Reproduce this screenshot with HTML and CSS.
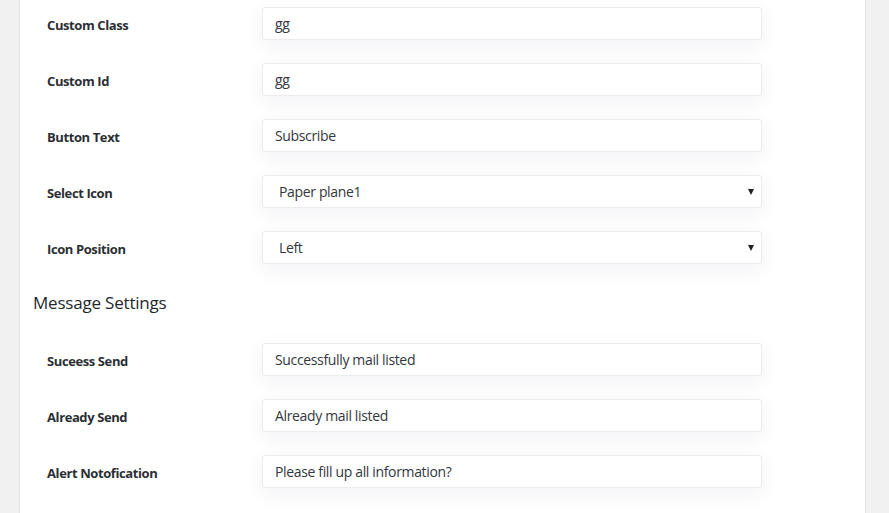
FILE: index.html
```html
<!DOCTYPE html>
<html>
<head>
<meta charset="utf-8">
<link rel="stylesheet" href="styles.css">
</head>
<body>
<div class="panel">
  <div class="row"><label class="lbl">Custom Class</label><input class="field" type="text" value="gg"></div>
  <div class="row"><label class="lbl">Custom Id</label><input class="field" type="text" value="gg"></div>
  <div class="row"><label class="lbl">Button Text</label><input class="field" type="text" value="Subscribe"></div>
  <div class="row"><label class="lbl">Select Icon</label><span class="sel-wrap"><select class="field sel"><option>Paper plane1</option></select></span></div>
  <div class="row"><label class="lbl">Icon Position</label><span class="sel-wrap"><select class="field sel"><option>Left</option></select></span></div>
  <h3 class="heading">Message Settings</h3>
  <div class="row"><label class="lbl">Suceess Send</label><input class="field" type="text" value="Successfully mail listed"></div>
  <div class="row"><label class="lbl">Already Send</label><input class="field" type="text" value="Already mail listed"></div>
  <div class="row"><label class="lbl">Alert Notofication</label><input class="field" type="text" value="Please fill up all information?"></div>
</div>
</body>
</html>
```
FILE: styles.css
```css
html, body {
  margin: 0;
  padding: 0;
  background: #f1f1f1;
  height: 513px;
  overflow: hidden;
}
body {
  font-family: "Open Sans", "Noto Sans", sans-serif;
  color: #23282d;
}
.panel {
  margin-left: 19px;
  width: 847px;
  min-height: 513px;
  background: #fff;
  border-left: 1px solid #e2e2e2;
  border-right: 1px solid #e2e2e2;
  padding-left: 13px;
  box-sizing: border-box;
}
.row {
  display: grid;
  grid-template-columns: 215px 500px;
  align-items: center;
  padding: 7px 0 16px 14px;
}
.lbl {
  font-size: 13px;
  font-weight: 700;
  letter-spacing: -0.4px;
  color: #2b2f33;
  position: relative;
  top: 1px;
}
.field {
  box-sizing: border-box;
  width: 500px;
  height: 33px;
  margin: 0;
  border: 1px solid #ececec;
  border-radius: 3px;
  background: #fff;
  box-shadow: 0 6px 22px rgba(30, 40, 90, 0.06);
  padding: 0 12px;
  font-family: inherit;
  font-size: 14px;
  letter-spacing: -0.35px;
  color: #32373c;
  outline: none;
}
.sel-wrap {
  position: relative;
  display: block;
  width: 500px;
}
.sel {
  -webkit-appearance: none;
  appearance: none;
  padding-left: 16px;
  display: block;
}
.sel-wrap::after {
  content: "";
  position: absolute;
  right: 8px;
  top: 14px;
  border-left: 3.5px solid transparent;
  border-right: 3.5px solid transparent;
  border-top: 6px solid #222;
  pointer-events: none;
}
.heading {
  margin: 11px 0 21px;
  font-size: 17px;
  line-height: 24px;
  font-weight: 400;
  letter-spacing: -0.2px;
  color: #23282d;
}
```
